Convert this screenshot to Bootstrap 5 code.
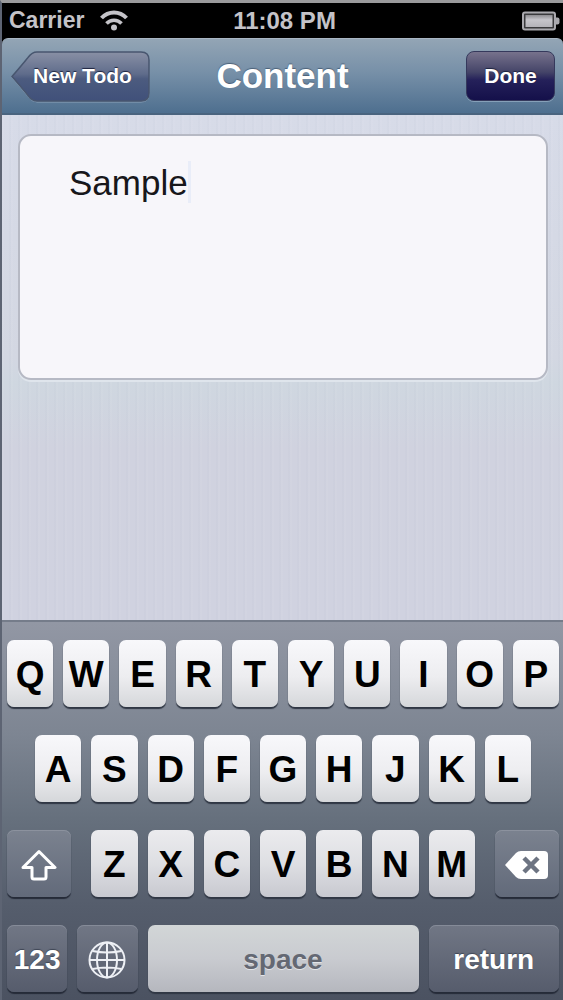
<!DOCTYPE html>
<html lang="en">
<head>
<meta charset="utf-8">
<meta name="viewport" content="width=device-width, initial-scale=1">
<title>Content</title>
<link href="https://cdn.jsdelivr.net/npm/bootstrap@5.3.0/dist/css/bootstrap.min.css" rel="stylesheet">
<style>
  body { font-family: "Liberation Sans", Arial, sans-serif; background: #d0d3df; border-left: 2px solid #5d6473; border-top: 3px solid #9a9a9c; }
  .status-bar { background: #000; color: #c4c3c8; height: 35px; font-size: 23px; line-height: 35px; padding: 0 3px 0 7px; }
  .status-side { flex: 1 1 0; }
  .status-time { font-size: 24px; }
  .title-bar { height: 77px; padding: 0 8px 0 9px; background: linear-gradient(#93a5b5, #7790a8 45%, #4e6f8f); border-top: 1px solid #a9b6c3; border-bottom: 2px solid #4a647f; border-radius: 6px 6px 0 0; }
  .title-wrap { background: #000; }
  .title-bar h1 { font-size: 35px; line-height: 40px; color: #fff; text-shadow: 0 -1px 1px #4c6178; }
  .bar-button { border: 0; height: 50px; font-size: 21px; line-height: 24px; color: #fff; text-shadow: 0 -1px 1px #1d2440; }
  .back-button { width: 139px; background: none; padding: 0 0 0 4px; }
  .back-button svg { left: 0; top: 0; }
  .done-button { width: 89px; padding: 0; border-radius: 8px; border: 1px solid #35395c; background: linear-gradient(#77728c, #444468 42%, #25215a 58%, #14104a); box-shadow: 0 1px 0 #86a0b8; }
  .editor-area { padding: 19px 15px 20px 16px; background: repeating-linear-gradient(90deg, #ffffff0a 0 2px, #ffffff00 2px 7px, #8f9ab00a 7px 9px), linear-gradient(#d7dbe8, #d3d7e2 48%, #cfd7e0 53%, #d0d2df 66%, #d0d2e0); }
  .note-box { height: 246px; font-size: 35px; line-height: 42px; padding: 26px 49px; color: #17171b; background: #f7f6fa; border: 2px solid #b6b9c4; border-radius: 13px; resize: none; box-shadow: 0 2px 0 #dfe5ec; }
  .note-box:focus { color: #17171b; background: #f7f6fa; border-color: #b6b9c4; box-shadow: 0 2px 0 #dfe5ec; }
  .caret { left: 170px; top: 27px; width: 3px; height: 42px; background: #e9edf8; }
  .keyboard { padding: 18px 4px 8px 5px; background: linear-gradient(#9297a4, #7d8592 30%, #66707d 52%, #555d6c 75%, #4b5261); border-top: 2px solid #757c8a; }
  .key-grid { grid-template-columns: repeat(20, minmax(0, 1fr)); column-gap: 10px; row-gap: 28px; }
  .key { grid-column: span 2; height: 67px; padding: 2px 0 0; border: 0; border-radius: 7px; color: #000; font-size: 37px; font-weight: 700; line-height: 40px; background: linear-gradient(#f8f8fb, #ededf0 55%, #d5d7da); box-shadow: 0 2px 1px #303744; }
  .key-low { background: linear-gradient(#ebebee, #dedfe3 50%, #c8c9d0); }
  .key-a { grid-column: 2 / span 2; }
  .key-z { grid-column: 4 / span 2; }
  .key-dark { color: #fff; font-size: 28px; background: linear-gradient(#7b828f, #626a7a); box-shadow: 0 2px 1px #252b38, inset 0 1px 0 #8c929e; text-shadow: 0 -1px 1px #3f4655; }
  .key-bottom { background: linear-gradient(#717785, #565c6c); box-shadow: 0 2px 1px #252b38, inset 0 1px 0 #858b98; }
  .key-shift { grid-column: 1 / span 3; margin-right: 10px; }
  .key-delete { grid-column: 18 / span 3; margin-left: 10px; }
  .key-modes { grid-column: 1 / span 5; gap: 10px; }
  .key-space { grid-column: span 10; font-size: 28px; color: #646873; text-shadow: 0 1px 0 #e2e4e8; background: linear-gradient(#d2d6d7, #c9cbd0 50%, #b5b7be); }
  .key-return { grid-column: span 5; }
</style>
</head>
<body class="min-vh-100 d-flex flex-column">
  <div class="status-bar d-flex align-items-center fw-bold">
    <div class="status-side d-flex align-items-center gap-3">
      <span>Carrier</span>
      <svg width="28" height="21" viewBox="0 0 28 21" fill="none" stroke="#c4c3c8" stroke-width="4" aria-label="Wi-Fi">
        <path d="M1.500 8C8.500 0.500 19.500 0.500 26.500 8"/>
        <path d="M6.500 13.500C10.500 9 17.500 9 21.500 13.500" stroke-width="3.500"/>
        <circle cx="14" cy="17.500" r="3" fill="#c4c3c8" stroke="none"/>
      </svg>
    </div>
    <span class="status-time">11:08 PM</span>
    <div class="status-side d-flex justify-content-end">
      <svg width="38" height="20" viewBox="0 0 38 20" aria-label="Battery">
        <defs><linearGradient id="charge" x2="0" y2="1"><stop stop-color="#8e8d91"/><stop offset=".4" stop-color="#c6c5ca"/><stop offset="1" stop-color="#b4b3b8"/></linearGradient></defs>
        <rect x="1" y="1.500" width="32" height="17" rx="2" fill="#3a3a3c" stroke="#aaa9ae" stroke-width="2"/>
        <rect x="3.500" y="4" width="27" height="12" fill="url(#charge)"/>
        <path d="M34 6.500h1.500q2 0 2 2v3q0 2-2 2H34z" fill="#aaa9ae"/>
      </svg>
    </div>
  </div>

  <div class="title-wrap">
    <header class="title-bar d-flex align-items-center justify-content-between position-relative">
      <button type="button" class="bar-button back-button fw-bold position-relative">
        <svg class="position-absolute" width="139" height="52" viewBox="0 0 139 52" aria-hidden="true">
          <defs><linearGradient id="back" x2="0" y2="1"><stop stop-color="#8990a5"/><stop offset=".45" stop-color="#5f6c8b"/><stop offset=".55" stop-color="#4c5b7f"/><stop offset="1" stop-color="#40507a"/></linearGradient></defs>
          <path d="M1 26.500Q11 15 17 7.500Q21 2 26 2H130Q138 2 138 10V43Q138 51 130 51H26Q21 51 17 45.500Q11 38 1 26.500Z" fill="none" stroke="#8ba1b8" stroke-width="1"/>
          <path d="M1 25.500Q11 14 17 6.500Q21 1 26 1H130Q138 1 138 9V42Q138 50 130 50H26Q21 50 17 44.500Q11 37 1 25.500Z" fill="url(#back)" stroke="#48566f" stroke-width="1.500"/>
        </svg>
        <span class="position-relative">New Todo</span>
      </button>
      <h1 id="page-title" class="fw-bold m-0 position-absolute top-50 start-50 translate-middle">Content</h1>
      <button type="button" class="bar-button done-button fw-bold">Done</button>
    </header>
  </div>

  <main class="editor-area flex-grow-1">
    <div class="position-relative">
      <textarea id="note" aria-labelledby="page-title" class="form-control note-box overflow-hidden" spellcheck="false">Sample</textarea>
      <span class="caret position-absolute"></span>
    </div>
  </main>

  <section class="keyboard" aria-label="Keyboard">
    <div class="key-grid d-grid">
      <button type="button" class="key">Q</button>
      <button type="button" class="key">W</button>
      <button type="button" class="key">E</button>
      <button type="button" class="key">R</button>
      <button type="button" class="key">T</button>
      <button type="button" class="key">Y</button>
      <button type="button" class="key">U</button>
      <button type="button" class="key">I</button>
      <button type="button" class="key">O</button>
      <button type="button" class="key">P</button>

      <button type="button" class="key key-a">A</button>
      <button type="button" class="key">S</button>
      <button type="button" class="key">D</button>
      <button type="button" class="key">F</button>
      <button type="button" class="key">G</button>
      <button type="button" class="key">H</button>
      <button type="button" class="key">J</button>
      <button type="button" class="key">K</button>
      <button type="button" class="key">L</button>

      <button type="button" class="key key-dark key-shift d-flex align-items-center justify-content-center" aria-label="Shift">
        <svg width="36" height="32" viewBox="0 0 36 32" fill="none" stroke="#fff" stroke-width="3" stroke-linejoin="round"><path d="M18 2.500L34 18.500H25V28Q25 30 23 30H13Q11 30 11 28V18.500H2Z"/></svg>
      </button>
      <button type="button" class="key key-low key-z">Z</button>
      <button type="button" class="key key-low">X</button>
      <button type="button" class="key key-low">C</button>
      <button type="button" class="key key-low">V</button>
      <button type="button" class="key key-low">B</button>
      <button type="button" class="key key-low">N</button>
      <button type="button" class="key key-low">M</button>
      <button type="button" class="key key-dark key-delete d-flex align-items-center justify-content-center" aria-label="Delete">
        <svg width="43" height="30" viewBox="0 0 43 30"><path d="M0 15L11 3Q13 1 16 1H39Q43 1 43 5V25Q43 29 39 29H16Q13 29 11 27Z" fill="#fff"/><path d="M19 8L33 22M33 8L19 22" stroke="#6d7482" stroke-width="4.500"/></svg>
      </button>

      <div class="key-modes d-flex">
        <button type="button" class="key key-dark key-bottom flex-fill w-50">123</button>
        <button type="button" class="key key-dark key-bottom flex-fill w-50 d-flex align-items-center justify-content-center" aria-label="Next keyboard">
          <svg width="38" height="38" viewBox="0 0 38 38" fill="none" stroke="#eef0f5" stroke-width="2"><circle cx="19" cy="19" r="17.500"/><ellipse cx="19" cy="19" rx="10" ry="17.500"/><path d="M19 1.500V36.500M1.500 19H36.500M4.500 10Q19 13 33.500 10M4.500 28Q19 25 33.500 28"/></svg>
        </button>
      </div>
      <button type="button" class="key key-space">space</button>
      <button type="button" class="key key-dark key-bottom key-return">return</button>
    </div>
  </section>
<script src="https://cdn.jsdelivr.net/npm/bootstrap@5.3.0/dist/js/bootstrap.bundle.min.js"></script>
</body>
</html>
